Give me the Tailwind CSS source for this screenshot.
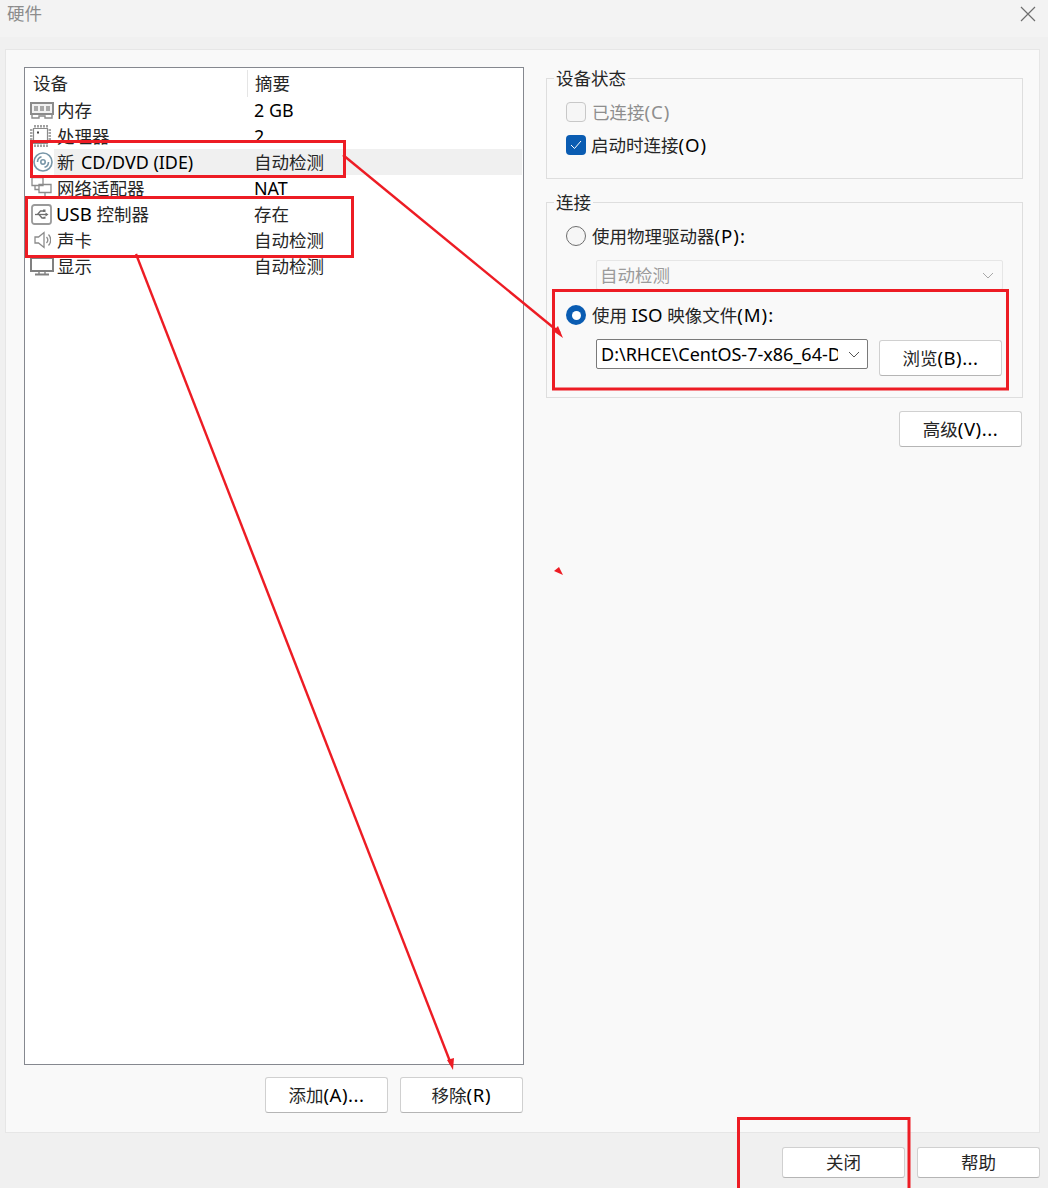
<!DOCTYPE html>
<html lang="zh-CN">
<head>
    <meta charset="utf-8"/>
    <title>硬件</title>
    <script src="https://cdn.jsdelivr.net/npm/@tailwindcss/browser@4"></script>
</head>
<body class="bg-[#f0f0f0]">
<div class="relative w-[1048px] h-[1188px] overflow-hidden flex flex-col text-[17.5px] leading-[26px] text-[#262626] font-['Noto_Sans','Noto_Sans_CJK_SC',sans-serif]">
    <!-- title bar -->
    <div class="h-[37px] bg-[#f3f3f3] flex items-start justify-between pl-[7px] pr-[12px] shrink-0">
        <span class="text-[#8c8c8c]">硬件</span>
        <svg class="mt-[6px]" width="16" height="16" viewBox="0 0 16 16" fill="none" stroke="#6e6e6e" stroke-width="1.2"><path d="M1 1 15 15M15 1 1 15"/></svg>
    </div>
    <!-- main panel -->
    <div class="ml-[5px] mt-[12px] w-[1035px] h-[1084px] shrink-0 bg-[#f9f9f9] border border-[#e6e6e6] flex">
        <!-- left column -->
        <div class="ml-[18px] mt-[17px] w-[500px] flex flex-col">
            <div class="h-[998px] bg-white border border-[#85888f] shrink-0">
                <div class="flex h-[29px] items-end">
                    <div class="w-[223px] h-[27px] pl-[8px] border-r border-[#e5e5e5]">设备</div>
                    <div class="pl-[7px] h-[27px]">摘要</div>
                </div>
                <div class="h-[26px] flex items-center">
                    <div class="w-[29px] shrink-0 pl-[5px]"><svg width="24" height="17" viewBox="0 0 24 17" fill="none" stroke="#8b8b8b"><path d="M1 1h22v11H1z" stroke-width="2" fill="#f2f2f2"/><path d="M2 13v3h7v-2h6v2h7v-3" stroke-width="1.400"/><path d="M4 4h4v5H4zM10 4h4v5h-4zM16 4h4v5h-4z" fill="#a8a8a8" stroke="none"/></svg></div>
                    <span class="w-[200px] pl-[3px]">内存</span><span class="text-black text-[17.9px]">2 GB</span>
                </div>
                <div class="h-[26px] flex items-center">
                    <div class="w-[29px] shrink-0 pl-[5px]"><svg width="21" height="24" viewBox="0 0 21 24" fill="none" stroke="#8b8b8b"><path d="M3.500 4.500h14v15h-14z" stroke-width="1.200"/><path d="M5 1v2.500M8 1v2.500M11 1v2.500M14 1v2.500M17 1v2.500M5 20.500V23M8 20.500V23M11 20.500V23M14 20.500V23M17 20.500V23M0 6h2.500M0 9h2.500M0 12h2.500M0 15h2.500M0 18h2.500M18.500 6H21M18.500 9H21M18.500 12H21M18.500 15H21M18.500 18H21" stroke-width="1.600"/><path d="M7 7.500h2v2H7z" fill="#444" stroke="none"/></svg></div>
                    <span class="w-[200px] pl-[3px]">处理器</span><span class="text-black text-[17.9px]">2</span>
                </div>
                <div class="h-[26px] flex items-center">
                    <div class="w-[29px] shrink-0 pl-[8px]"><svg width="20" height="20" viewBox="0 0 20 20" fill="none" stroke="#7896a8" stroke-width="1.600"><circle cx="10" cy="10" r="9"/><circle cx="10" cy="10" r="2.200"/><path d="M4.500 10a5.500 5.500 0 0 1 4-5.300M15.500 10a5.500 5.500 0 0 1-4 5.300"/></svg></div>
                    <div class="flex-1 h-full bg-[#f0f0f0] flex items-center mr-[1px]">
                        <span class="w-[200px] pl-[3px] whitespace-nowrap">新 <span class="ml-[2px] text-black text-[17.9px]">CD/DVD (IDE)</span></span><span>自动检测</span>
                    </div>
                </div>
                <div class="h-[26px] flex items-center">
                    <div class="w-[29px] shrink-0 pl-[6px]"><svg width="22" height="24" viewBox="0 0 22 24" fill="none" stroke="#8b8b8b" stroke-width="1.300"><path d="M1 1.500h11v8H1zM8 8.500h12v8H8zM14 16.500v4M9 21h10M4 9.500v4h4"/></svg></div>
                    <span class="w-[200px] pl-[3px]">网络适配器</span><span class="text-black text-[17.9px]">NAT</span>
                </div>
                <div class="h-[26px] flex items-center">
                    <div class="w-[29px] shrink-0 pl-[6px]"><svg width="21" height="21" viewBox="0 0 21 21" fill="none" stroke="#9a9a9a" stroke-width="1.800"><rect x="1" y="1" width="19" height="19" rx="2.500"/><path d="M4 10.500h11" stroke="#6e6e6e" stroke-width="1.300"/><path d="M6.500 10.500l3-3.500h3M8 10.500l3 3.500h2" stroke="#6e6e6e" stroke-width="1.300"/><path d="M17.500 10.500l-3-2v4z" fill="#6e6e6e" stroke="none"/><path d="M12 5.500h2.500V8H12zM12.500 12.800h2v2h-2z" fill="#6e6e6e" stroke="none"/></svg></div>
                    <span class="w-[200px] pl-[2px] whitespace-nowrap"><span class="text-black text-[18.6px]">USB</span> 控制器</span><span>存在</span>
                </div>
                <div class="h-[26px] flex items-center">
                    <div class="w-[29px] shrink-0 pl-[9px]"><svg width="17" height="18" viewBox="0 0 17 18" fill="none" stroke="#8b8b8b" stroke-width="1.300"><path d="M1 6h3.500L10 1.500v15L4.500 12H1zM12.500 6a4.500 4.500 0 0 1 0 6M14.500 3.500a8 8 0 0 1 0 11"/></svg></div>
                    <span class="w-[200px] pl-[3px]">声卡</span><span>自动检测</span>
                </div>
                <div class="h-[26px] flex items-center">
                    <div class="w-[29px] shrink-0 pl-[5px]"><svg width="24" height="19" viewBox="0 0 24 19" fill="none" stroke="#808080" stroke-width="2"><path d="M1 1h22v13H1z"/><path d="M9 15v2M15 15v2" stroke-width="1.400"/><path d="M5 17.500h14" stroke-width="2"/></svg></div>
                    <span class="w-[200px] pl-[3px]">显示</span><span>自动检测</span>
                </div>
            </div>
            <div class="flex justify-end gap-[12px] mt-[12px] mr-[1px]">
                <button class="w-[123px] h-[36px] bg-white border border-[#d0d0d0] border-b-[#b5b5b5] rounded-[3px]">添加<span class="text-black text-[18.6px] tracking-[.5px]">(A)...</span></button>
                <button class="w-[123px] h-[36px] bg-white border border-[#d0d0d0] border-b-[#b5b5b5] rounded-[3px]">移除<span class="text-black text-[18.6px] tracking-[.7px]">(R)</span></button>
            </div>
        </div>
        <!-- right column -->
        <div class="ml-[22px] w-[477px] flex flex-col items-end">
            <div class="relative mt-[28px] w-[477px] h-[101px] border border-[#dedede] shrink-0">
                <span class="absolute left-[7px] top-[-14px] px-[2px] bg-[#f9f9f9]">设备状态</span>
                <div class="pl-[19px] mt-[16px] flex items-center gap-[6px] h-[33px] text-[#8e8e8e]">
                    <span class="w-[20px] h-[20px] border border-[#c8c8c8] rounded-[4px] bg-[#f6f6f6] shrink-0"></span><span>已连接<span class="text-[18.6px] tracking-[1px]">(C)</span></span>
                </div>
                <div class="pl-[19px] flex items-center gap-[5px] h-[33px]">
                    <span class="w-[20px] h-[20px] rounded-[4px] bg-[#0a5cb2] shrink-0 flex items-center justify-center">
                        <svg width="12" height="10" viewBox="0 0 12 10" fill="none" stroke="#fff" stroke-width="1"><path d="M1 5l3.500 3.500L11 1"/></svg>
                    </span><span>启动时连接<span class="text-black text-[18.6px] tracking-[1px]">(O)</span></span>
                </div>
            </div>
            <div class="relative mt-[23px] w-[477px] h-[196px] border border-[#dedede] shrink-0">
                <span class="absolute left-[7px] top-[-14px] px-[2px] bg-[#f9f9f9]">连接</span>
                <div class="pl-[19px] mt-[20px] flex items-center gap-[6px]">
                    <span class="w-[20px] h-[20px] border border-[#6e6e6e] rounded-full bg-[#f6f6f6] shrink-0"></span><span>使用物理驱动器<span class="text-black text-[18.6px] tracking-[1px]">(P):</span></span>
                </div>
                <div class="ml-[49px] mt-[11px] w-[407px] h-[30px] border border-[#e6e6e6] rounded-[2px] flex items-center justify-between pl-[3px] pr-[8px] text-[#9b9b9b] bg-[#f9f9f9]">
                    <span>自动检测</span>
                    <svg width="12" height="7" viewBox="0 0 12 7" fill="none" stroke="#a8a8a8"><path d="M1 1l5 5 5-5"/></svg>
                </div>
                <div class="pl-[19px] mt-[12px] flex items-center gap-[6px]">
                    <span class="w-[20px] h-[20px] rounded-full bg-[#0a5cb2] shrink-0 flex items-center justify-center"><span class="w-[9px] h-[9px] rounded-full bg-white"></span></span><span class="whitespace-nowrap">使用 <span class="text-black text-[18.6px]">ISO</span> 映像文件<span class="text-black text-[18.6px] tracking-[1px]">(M):</span></span>
                </div>
                <div class="ml-[49px] mt-[11px] flex items-start gap-[11px]">
                    <div class="w-[272px] h-[30px] bg-white border border-[#7a7a7a] rounded-[2px] flex items-center pl-[4px] pr-[7px] justify-between">
                        <span class="w-[237px] overflow-hidden whitespace-nowrap text-black text-[18px]">D:\RHCE\CentOS-7-x86_64-DV</span>
                        <svg class="shrink-0" width="12" height="7" viewBox="0 0 12 7" fill="none" stroke="#555"><path d="M1 1l5 5 5-5"/></svg>
                    </div>
                    <button class="w-[123px] h-[36px] mt-[1px] bg-white border border-[#d0d0d0] border-b-[#b5b5b5] rounded-[3px]">浏览<span class="text-black text-[18.6px] tracking-[.5px]">(B)...</span></button>
                </div>
            </div>
            <button class="mt-[13px] mr-[1px] w-[123px] h-[36px] bg-white border border-[#d0d0d0] border-b-[#b5b5b5] rounded-[3px] shrink-0">高级<span class="text-black text-[18.6px] tracking-[.5px]">(V)...</span></button>
        </div>
    </div>
    <!-- footer -->
    <div class="flex justify-end gap-[12px] pr-[8px] mt-[14px]">
        <button class="w-[123px] h-[31px] pb-[2px] bg-white border border-[#d0d0d0] border-b-[#b5b5b5] rounded-[3px]">关闭</button>
        <button class="w-[123px] h-[31px] pb-[2px] bg-white border border-[#d0d0d0] border-b-[#b5b5b5] rounded-[3px]">帮助</button>
    </div>
    <!-- red annotations drawn over the dialog -->
    <svg class="absolute left-0 top-0 pointer-events-none" width="1048" height="1188" viewBox="0 0 1048 1188" fill="none" stroke="#ed1c24">
        <g stroke-width="3">
            <rect x="31.500" y="141.500" width="313" height="35"/>
            <rect x="26.500" y="197.500" width="326" height="59"/>
            <rect x="553.500" y="290.500" width="454" height="98.500"/>
            <path d="M738.500 1188V1118.500H909V1188"/>
        </g>
        <g stroke-width="2.400">
            <path d="M343 155 560 333"/>
            <path d="M136 254 451 1064"/>
        </g>
        <path d="M563 338 553 331 558 326Z M453 1070 447 1060 454 1058Z M563 575 554 571 559 567Z" fill="#ed1c24" stroke="none"/>
    </svg>
</div>
</body>
</html>
